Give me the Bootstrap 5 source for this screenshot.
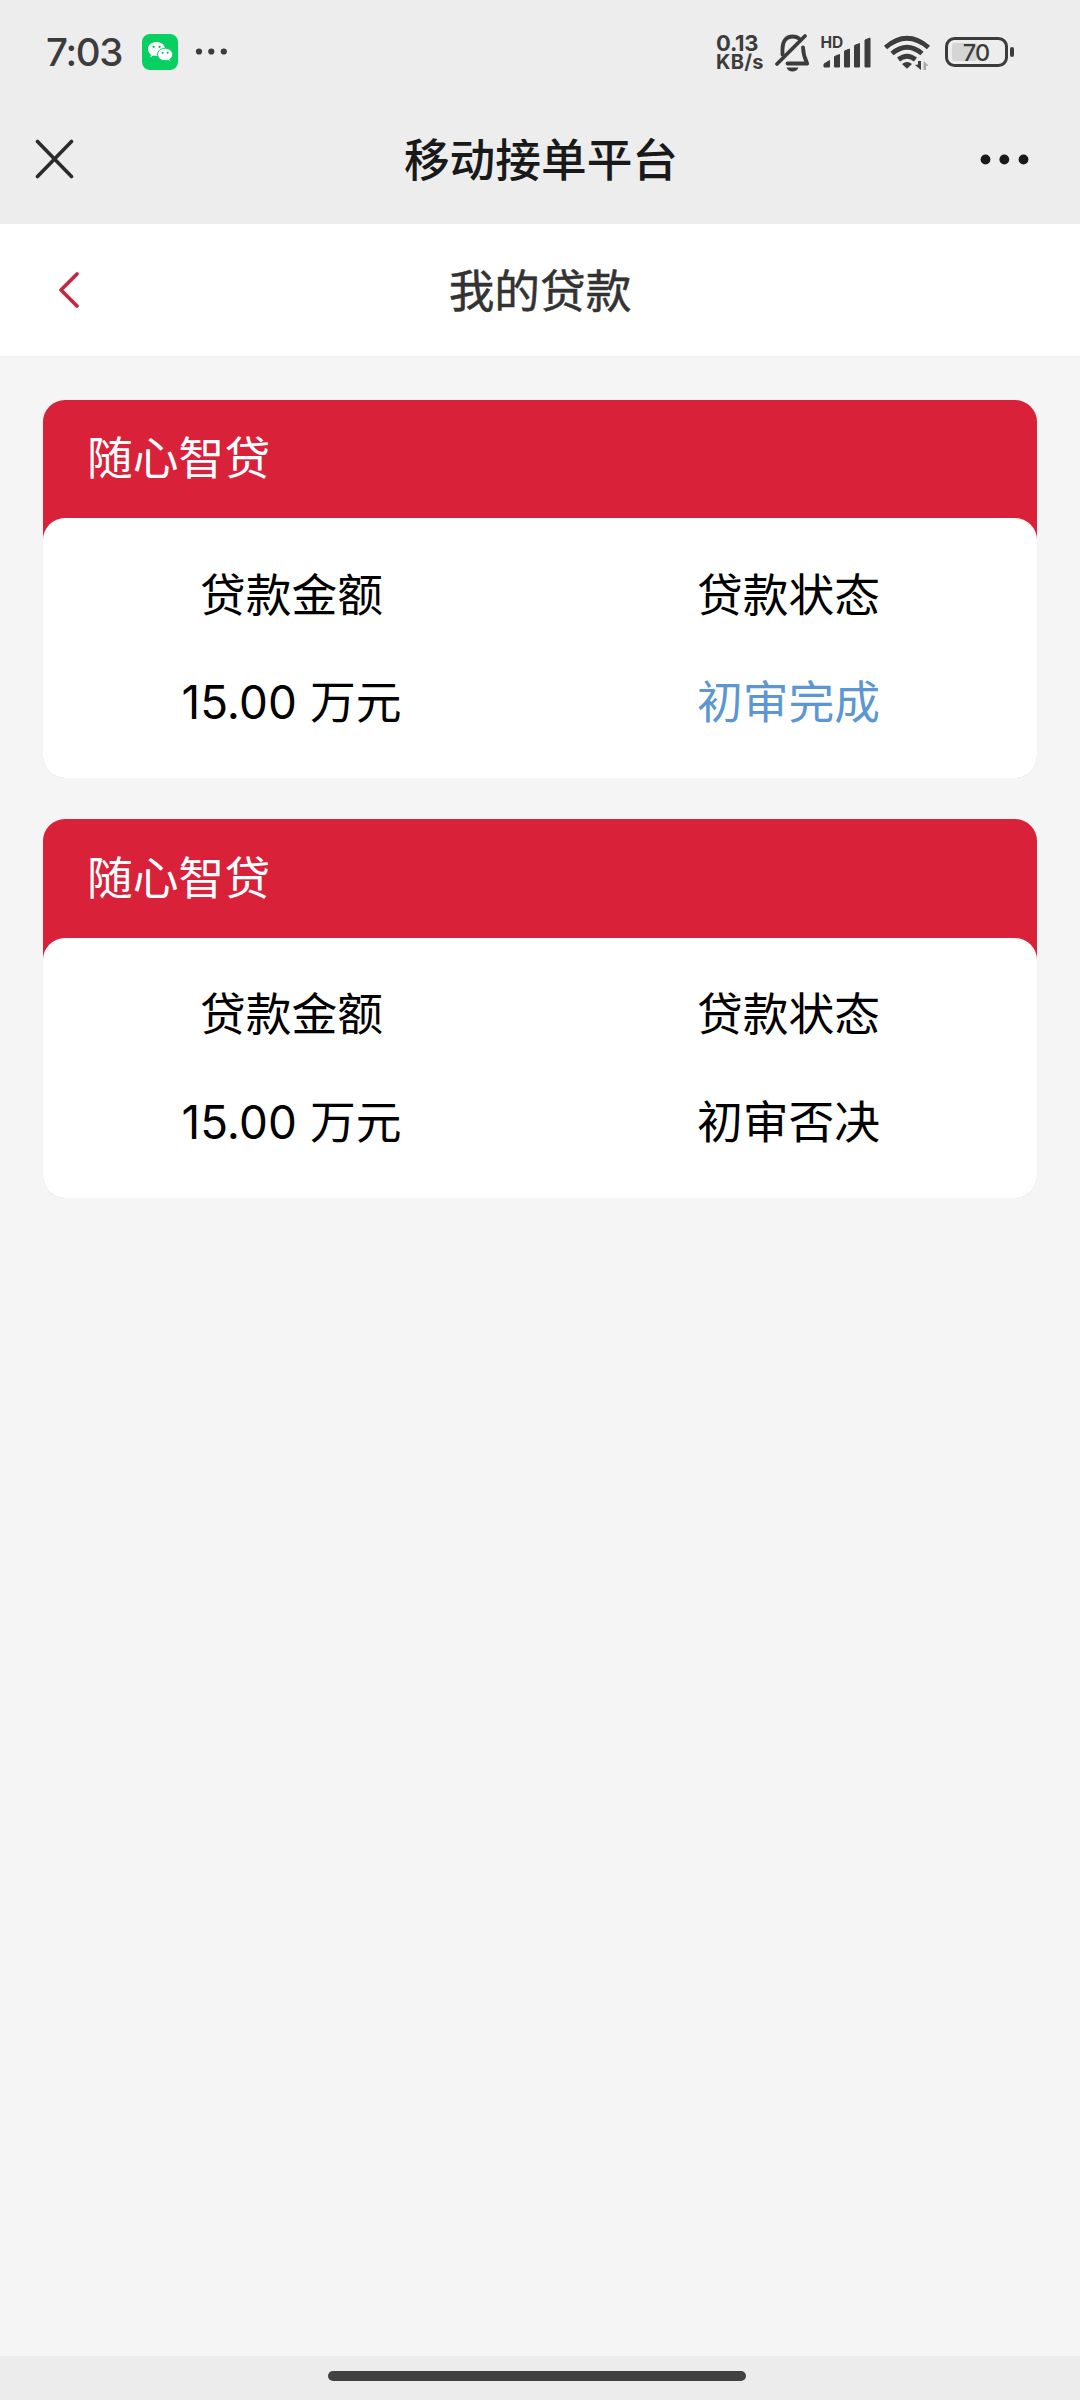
<!DOCTYPE html>
<html lang="zh-CN">
<head>
<meta charset="utf-8">
<meta name="viewport" content="width=device-width, initial-scale=1">
<title>我的贷款</title>
<link href="https://cdn.jsdelivr.net/npm/bootstrap@5.3.0/dist/css/bootstrap.min.css" rel="stylesheet">
<style>
body{background:#f5f5f5;font-family:Inter,"Noto Sans CJK SC",sans-serif;font-size:46px;line-height:60px;color:#000;height:2400px;overflow:hidden}
svg{display:block;flex:none}
.status-bar{height:103px;padding-left:46px;padding-right:44px;color:#3c3c3c}
.top-shell{background:#ededed;height:224px}
.clock{font-size:38.5px;font-weight:500;line-height:44px;letter-spacing:-1.3px;width:96px}
.net-speed{font-size:22px;font-weight:700;line-height:19px;width:58px;letter-spacing:-.3px;padding-top:3px}
.net-speed span{font-size:20px;letter-spacing:.3px;display:block}
.app-bar{height:112px;padding:0 49px 0 35px;color:#191919}
.app-title{font-weight:500;font-size:45.7px;padding-top:3px}
.page-bar{height:132px;background:#fff;padding:0 56px;color:#333}
.page-title{font-size:45.7px;font-weight:400;-webkit-text-stroke:.5px #333;padding-top:3px}
.side{width:60px}
.app-side{width:52px}
.loan-list{padding:43px 43px 0;gap:41px;border-top:1px solid #f0f0f0}
.loan-card{background:linear-gradient(#d92139 160px,#d8d8d8 160px);border:0;border-radius:22px;overflow:hidden}
.loan-name{height:118.4px;padding:0 0 0 44px;color:#fff}
.loan-info{background:#fff;border-radius:22px;height:260px;padding-top:24px}
.loan-info p{height:107.3px;display:flex;align-items:center;justify-content:center;margin:0;white-space:pre}
.figure-num{letter-spacing:.1px}
.status-done{color:#5c97d3}
.home-bar{height:44px;background:#ececec;padding:0 6px 4px 0}
.home-pill{width:418px;height:10px;background:#424242}
.cell-txt{font-size:45.8px;font-weight:400}
</style>
</head>
<body class="d-flex flex-column">
<header class="top-shell flex-shrink-0">
  <div class="status-bar d-flex align-items-center">
    <div class="clock">7:03</div>
    <svg width="36" height="36" viewBox="0 0 36 36">
      <rect width="36" height="36" rx="8" fill="#07d062"/>
      <path fill="#fff" d="M14.500 8C9.700 8 6 11 6 15c0 2.300 1.200 4.200 3 5.500l-.8 2.700 3.100-1.600c1 .3 2 .4 3.200.4 4.900 0 8.500-3 8.500-7s-3.600-7-8.500-7z"/>
      <path fill="#fff" stroke="#07d062" stroke-width="1" d="M23.200 14.300c-4.500 0-7.700 2.700-7.700 6.200s3.200 6.200 7.700 6.200c1 0 1.800-.1 2.600-.4l2.700 1.400-.7-2.400c1.800-1.200 2.900-2.800 2.900-4.800 0-3.500-3.200-6.200-7.500-6.200z"/>
      <g fill="#07b257"><circle cx="11.600" cy="12.800" r="1.100"/><circle cx="17.600" cy="12.800" r="1.100"/><circle cx="20.600" cy="18.700" r="1"/><circle cx="25.600" cy="18.700" r="1"/></g>
    </svg>
    <svg class="ms-3" width="36" height="36" viewBox="0 0 36 36" fill="#3c3c3c"><circle cx="5" cy="17.500" r="3.100"/><circle cx="17.300" cy="17.500" r="3.100"/><circle cx="29.800" cy="17.500" r="3.100"/></svg>
    <div class="net-speed ms-auto">0.13<span>KB/s</span></div>
    <svg width="262" height="40" viewBox="774 31 262 40" fill="none" stroke="#3c3c3c">
      <g stroke-width="3.800" stroke-linecap="round" stroke-linejoin="round">
        <path d="M777 63 805 35"/>
        <path d="M782.500 53.500v-5.500c0-7.500 3.500-12.500 10-12.500 3 0 5 .7 6.500 2M803 46.500c.2 6 1.500 10.500 4.200 16H787.500"/>
      </g>
      <path fill="#3c3c3c" stroke="none" d="M786.500 66.500h12c-1 2.500-3 4-6 4s-5-1.500-6-4z"/>
      <path stroke="#3c3c3c" stroke-width="1" stroke-linejoin="round" fill="#3c3c3c" d="M824 63l5.500-3.500v6.500h-5.500zM834.500 55.500l5-2v12.500h-5zM844.500 50l5-2v18h-5zM854.500 44.500l5-2v23.500h-5zM865 39l5-2v29h-5z"/>
      <g stroke-width="4.800"><path d="M885.500 46.500q21.500-18.500 43 0"/><path d="M892 52.500q15-12.500 30 0"/><path d="M898.500 58.500q8.500-6.500 17 0"/></g>
      <path fill="#3c3c3c" stroke="none" d="M902 63q5-4 10 0l-5 4.800zM915 64l3-.5V60h3v9z"/>
      <path fill="#aaa" stroke="none" d="M923.500 60l5 4.500-2.500.5v4h-2.500z"/>
      <rect x="946.500" y="37.500" width="60" height="27" rx="8" stroke-width="3"/>
      <rect x="952" y="42" width="25" height="18" rx="3" fill="#d5d5d5" stroke="none"/>
      <rect x="1010" y="46" width="4" height="10" rx="2" fill="#3c3c3c" stroke="none"/>
      <text x="976" y="59.700" text-anchor="middle" font-size="23.500" letter-spacing="-.8" font-weight="500" fill="#3c3c3c" stroke="none">70</text>
      <text x="820.500" y="47" font-size="15.500" font-weight="700" fill="#3c3c3c" stroke="none">HD</text>
    </svg>
  </div>
  <div class="app-bar d-flex align-items-center justify-content-between">
    <div class="app-side"><svg width="40" height="40" viewBox="0 0 40 40" stroke="#2b2b2b" stroke-width="3.600" stroke-linecap="round"><path d="M2.500 2.500l34 35M36.500 2.500l-34 35"/></svg></div>
    <div class="app-title ps-3">移动接单平台</div>
    <svg width="52" height="20" viewBox="0 0 52 20" fill="#191919"><circle cx="6.500" cy="10.500" r="4.900"/><circle cx="25.300" cy="10.500" r="4.900"/><circle cx="44.500" cy="10.500" r="4.900"/></svg>
  </div>
</header>
<nav class="page-bar d-flex align-items-center justify-content-between flex-shrink-0">
  <div class="side"><svg width="26" height="38" viewBox="0 0 26 38" fill="none" stroke="#c22a44" stroke-width="3.800" stroke-linecap="round" stroke-linejoin="round"><path d="M21 3 5 19 21 35"/></svg></div>
  <div class="page-title">我的贷款</div>
  <div class="side"></div>
</nav>
<main class="loan-list d-flex flex-column flex-grow-1">
  <section class="card loan-card">
    <div class="loan-name d-flex align-items-center cell-txt">随心智贷</div>
    <div class="loan-info cell-txt"><div class="row g-0">
      <div class="col-6"><p>贷款金额</p><p><span class="figure-num">15.00 </span>万元</p></div>
      <div class="col-6"><p>贷款状态</p><p class="status-done">初审完成</p></div>
    </div></div>
  </section>
  <section class="card loan-card">
    <div class="loan-name d-flex align-items-center cell-txt">随心智贷</div>
    <div class="loan-info cell-txt"><div class="row g-0">
      <div class="col-6"><p>贷款金额</p><p><span class="figure-num">15.00 </span>万元</p></div>
      <div class="col-6"><p>贷款状态</p><p>初审否决</p></div>
    </div></div>
  </section>
</main>
<footer class="home-bar d-flex justify-content-center align-items-center flex-shrink-0"><div class="home-pill rounded-pill"></div></footer>
<script src="https://cdn.jsdelivr.net/npm/bootstrap@5.3.0/dist/js/bootstrap.bundle.min.js"></script>
</body>
</html>
